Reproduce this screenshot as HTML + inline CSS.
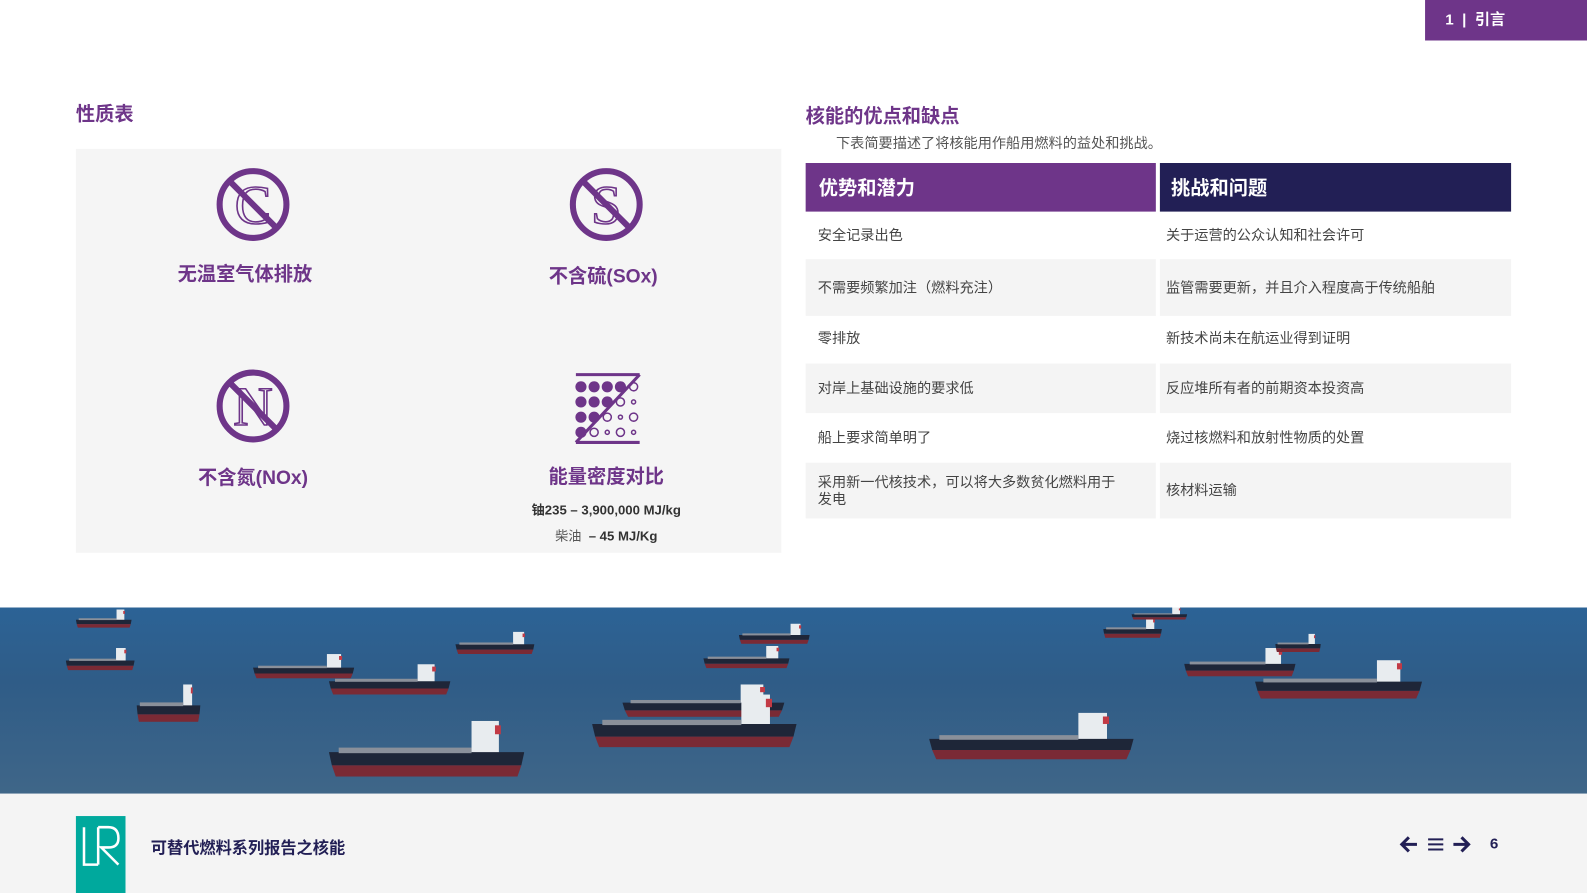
<!DOCTYPE html>
<html><head><meta charset="utf-8"><style>
*{margin:0;padding:0;box-sizing:border-box}
html,body{width:1587px;height:893px;overflow:hidden;background:#fff}
#w{position:absolute;left:0;top:0;width:1568px;height:882px;transform:scale(1.01212,1.01247);transform-origin:0 0;font-family:"Liberation Sans","Noto Sans CJK SC",sans-serif}
.a{position:absolute}
.p{color:#6e3589}
.lbl{position:absolute;font-size:19px;font-weight:bold;color:#6e3589;text-align:center;width:300px}
.cell{position:absolute;font-size:14px;color:#444;display:flex;align-items:center;padding-left:12px;line-height:17px}
.g{background:#f4f4f4}
</style></head><body><div id="w">
<div class="a" style="left:1408px;top:0;width:160px;height:40px;background:#6e3589;color:#fff;font-size:15px;font-weight:bold;line-height:40px;padding-left:20px">1&nbsp;&nbsp;|&nbsp;&nbsp;引言</div>

<div class="a p" style="left:75px;top:98px;font-size:19px;font-weight:bold">性质表</div>
<div class="a" style="left:75px;top:147px;width:697px;height:399px;background:#f5f5f5"></div>

<svg class="a" style="left:212px;top:164px" width="76" height="76"><text x="38" y="57" text-anchor="middle" font-family="Liberation Serif" font-size="54" fill="none" stroke="#6e3589" stroke-width="1.6">C</text><circle cx="38" cy="38" r="33" fill="none" stroke="#6e3589" stroke-width="6"/><line x1="15" y1="15" x2="61" y2="61" stroke="#6e3589" stroke-width="6"/></svg>
<div class="lbl" style="left:92px;top:256px">无温室气体排放</div>

<svg class="a" style="left:561px;top:164px" width="76" height="76"><text x="38" y="57" text-anchor="middle" font-family="Liberation Serif" font-size="54" fill="none" stroke="#6e3589" stroke-width="1.6">S</text><circle cx="38" cy="38" r="33" fill="none" stroke="#6e3589" stroke-width="6"/><line x1="15" y1="15" x2="61" y2="61" stroke="#6e3589" stroke-width="6"/></svg>
<div class="lbl" style="left:446px;top:258px">不含硫(SOx)</div>

<svg class="a" style="left:212px;top:363px" width="76" height="76"><text x="38" y="57" text-anchor="middle" font-family="Liberation Serif" font-size="54" fill="none" stroke="#6e3589" stroke-width="1.6">N</text><circle cx="38" cy="38" r="33" fill="none" stroke="#6e3589" stroke-width="6"/><line x1="15" y1="15" x2="61" y2="61" stroke="#6e3589" stroke-width="6"/></svg>
<div class="lbl" style="left:100px;top:457px">不含氮(NOx)</div>

<svg class="a" style="left:566px;top:368px" width="70" height="72">
<line x1="3" y1="2" x2="66" y2="2" stroke="#6e3589" stroke-width="3"/><line x1="3" y1="69" x2="66" y2="69" stroke="#6e3589" stroke-width="3"/>
<g fill="#6e3589"><circle cx="8" cy="14" r="5.5"/><circle cx="21" cy="14" r="5.5"/><circle cx="34" cy="14" r="5.5"/><circle cx="47" cy="14" r="5.5"/><circle cx="8" cy="29" r="5.5"/><circle cx="21" cy="29" r="5.5"/><circle cx="34" cy="29" r="5.5"/><circle cx="8" cy="44" r="5.5"/><circle cx="21" cy="44" r="5.5"/><circle cx="8" cy="59" r="5.5"/></g>
<g fill="none" stroke="#6e3589" stroke-width="1.5"><circle cx="60" cy="14" r="4"/><circle cx="47" cy="29" r="4"/><circle cx="60" cy="29" r="2"/><circle cx="34" cy="44" r="4"/><circle cx="47" cy="44" r="2"/><circle cx="60" cy="44" r="4"/><circle cx="21" cy="59" r="4"/><circle cx="34" cy="59" r="2"/><circle cx="47" cy="59" r="4"/><circle cx="60" cy="59" r="2"/></g>
<line x1="3" y1="69" x2="66" y2="2" stroke="#6e3589" stroke-width="3"/></svg>
<div class="lbl" style="left:449px;top:456px">能量密度对比</div>
<div class="a" style="left:449px;top:493px;width:300px;text-align:center;font-size:13px;font-weight:bold;color:#333">铀235 – 3,900,000 MJ/kg</div>
<div class="a" style="left:449px;top:519px;width:300px;text-align:center;font-size:13px;font-weight:bold;color:#333"><span style="font-weight:normal;color:#555">柴油</span>&nbsp; – 45 MJ/Kg</div>

<div class="a p" style="left:796px;top:100px;font-size:19px;font-weight:bold">核能的优点和缺点</div>
<div class="a" style="left:826px;top:131px;font-size:14px;color:#555">下表简要描述了将核能用作船用燃料的益处和挑战。</div>
<div class="a" style="left:796px;top:161px;width:346px;height:48px;background:#6e3589;color:#fff;font-size:19px;font-weight:bold;line-height:52px;padding-left:13px">优势和潜力</div>
<div class="a" style="left:1146px;top:161px;width:347px;height:48px;background:#221f55;color:#fff;font-size:19px;font-weight:bold;line-height:52px;padding-left:11px">挑战和问题</div>

<div class="cell" style="left:796px;top:209px;width:346px;height:47px">安全记录出色</div>
<div class="cell" style="left:1146px;top:209px;width:347px;height:47px;padding-left:6px">关于运营的公众认知和社会许可</div>
<div class="cell g" style="left:796px;top:256px;width:346px;height:56px">不需要频繁加注（燃料充注）</div>
<div class="cell g" style="left:1146px;top:256px;width:347px;height:56px;padding-left:6px">监管需要更新，并且介入程度高于传统船舶</div>
<div class="cell" style="left:796px;top:312px;width:346px;height:45px">零排放</div>
<div class="cell" style="left:1146px;top:312px;width:347px;height:45px;padding-left:6px">新技术尚未在航运业得到证明</div>
<div class="cell g" style="left:796px;top:359px;width:346px;height:49px">对岸上基础设施的要求低</div>
<div class="cell g" style="left:1146px;top:359px;width:347px;height:49px;padding-left:6px">反应堆所有者的前期资本投资高</div>
<div class="cell" style="left:796px;top:408px;width:346px;height:48px">船上要求简单明了</div>
<div class="cell" style="left:1146px;top:408px;width:347px;height:48px;padding-left:6px">烧过核燃料和放射性物质的处置</div>
<div class="cell g" style="left:796px;top:457px;width:346px;height:55px">采用新一代核技术，可以将大多数贫化燃料用于<br>发电</div>
<div class="cell g" style="left:1146px;top:457px;width:347px;height:55px;padding-left:6px">核材料运输</div>

<svg class="a" style="left:0;top:600px" width="1568" height="184" viewBox="0 0 1568 184" preserveAspectRatio="none">
<defs><linearGradient id="sea" x1="0" y1="0" x2="0" y2="1"><stop offset="0" stop-color="#2c6396"/><stop offset="0.4" stop-color="#2f5c87"/><stop offset="1" stop-color="#3f6688"/></linearGradient>
<symbol id="sh" viewBox="0 0 200 50" preserveAspectRatio="none"><rect x="146" y="0" width="28" height="32" fill="#e8ecef"/><rect x="170" y="4" width="6" height="8" fill="#c23a45"/><polygon points="0,28 200,28 197,40 3,40" fill="#1e2638"/><polygon points="3,40 197,40 193,50 7,50" fill="#7a2a35"/><rect x="10" y="24" width="136" height="5" fill="#8a909a"/></symbol></defs>
<rect width="1568" height="184" fill="url(#sea)"/>
<use href="#sh" x="75" y="2" width="55" height="18"/>
<use href="#sh" x="65" y="40" width="68" height="22"/>
<use href="#sh" x="135" y="76" width="63" height="37"/>
<use href="#sh" x="250" y="46" width="100" height="24"/>
<use href="#sh" x="325" y="56" width="120" height="30"/>
<use href="#sh" x="450" y="24" width="78" height="22"/>
<use href="#sh" x="695" y="38" width="85" height="22"/>
<use href="#sh" x="730" y="16" width="70" height="20"/>
<use href="#sh" x="615" y="76" width="160" height="32"/>
<use href="#sh" x="585" y="86" width="202" height="52"/>
<use href="#sh" x="325" y="112" width="193" height="55"/>
<use href="#sh" x="918" y="104" width="202" height="46"/>
<use href="#sh" x="1090" y="10" width="58" height="20"/>
<use href="#sh" x="1118" y="0" width="55" height="12"/>
<use href="#sh" x="1170" y="40" width="110" height="28"/>
<use href="#sh" x="1240" y="52" width="165" height="38"/>
<use href="#sh" x="1260" y="26" width="45" height="18"/>
</svg>

<div class="a" style="left:0;top:784px;width:1568px;height:98px;background:#f4f4f4"></div>
<div class="a" style="left:75px;top:806px;width:49px;height:76px;background:#00a99d"></div>
<svg class="a" style="left:75px;top:806px" width="49" height="76"><path d="M8 11 V48 H22 M22 11 V48 M22 11 H32 Q42 11 42 22 Q42 31 32 31 H25 L42 48" fill="none" stroke="#fff" stroke-width="2.5"/></svg>
<div class="a" style="left:149px;top:824px;font-size:16px;font-weight:bold;color:#221f55">可替代燃料系列报告之核能</div>
<svg class="a" style="left:1382px;top:824px" width="75" height="20"><g fill="none" stroke="#221f55" stroke-width="3"><path d="M18 10 H4 M10 3 L3 10 L10 17"/><path d="M29 5 H44 M29 10 H44 M29 15 H44" stroke-width="2"/><path d="M54 10 H68 M62 3 L69 10 L62 17"/></g></svg>
<div class="a" style="left:1472px;top:825px;font-size:15px;font-weight:bold;color:#221f55">6</div>
</div></body></html>
